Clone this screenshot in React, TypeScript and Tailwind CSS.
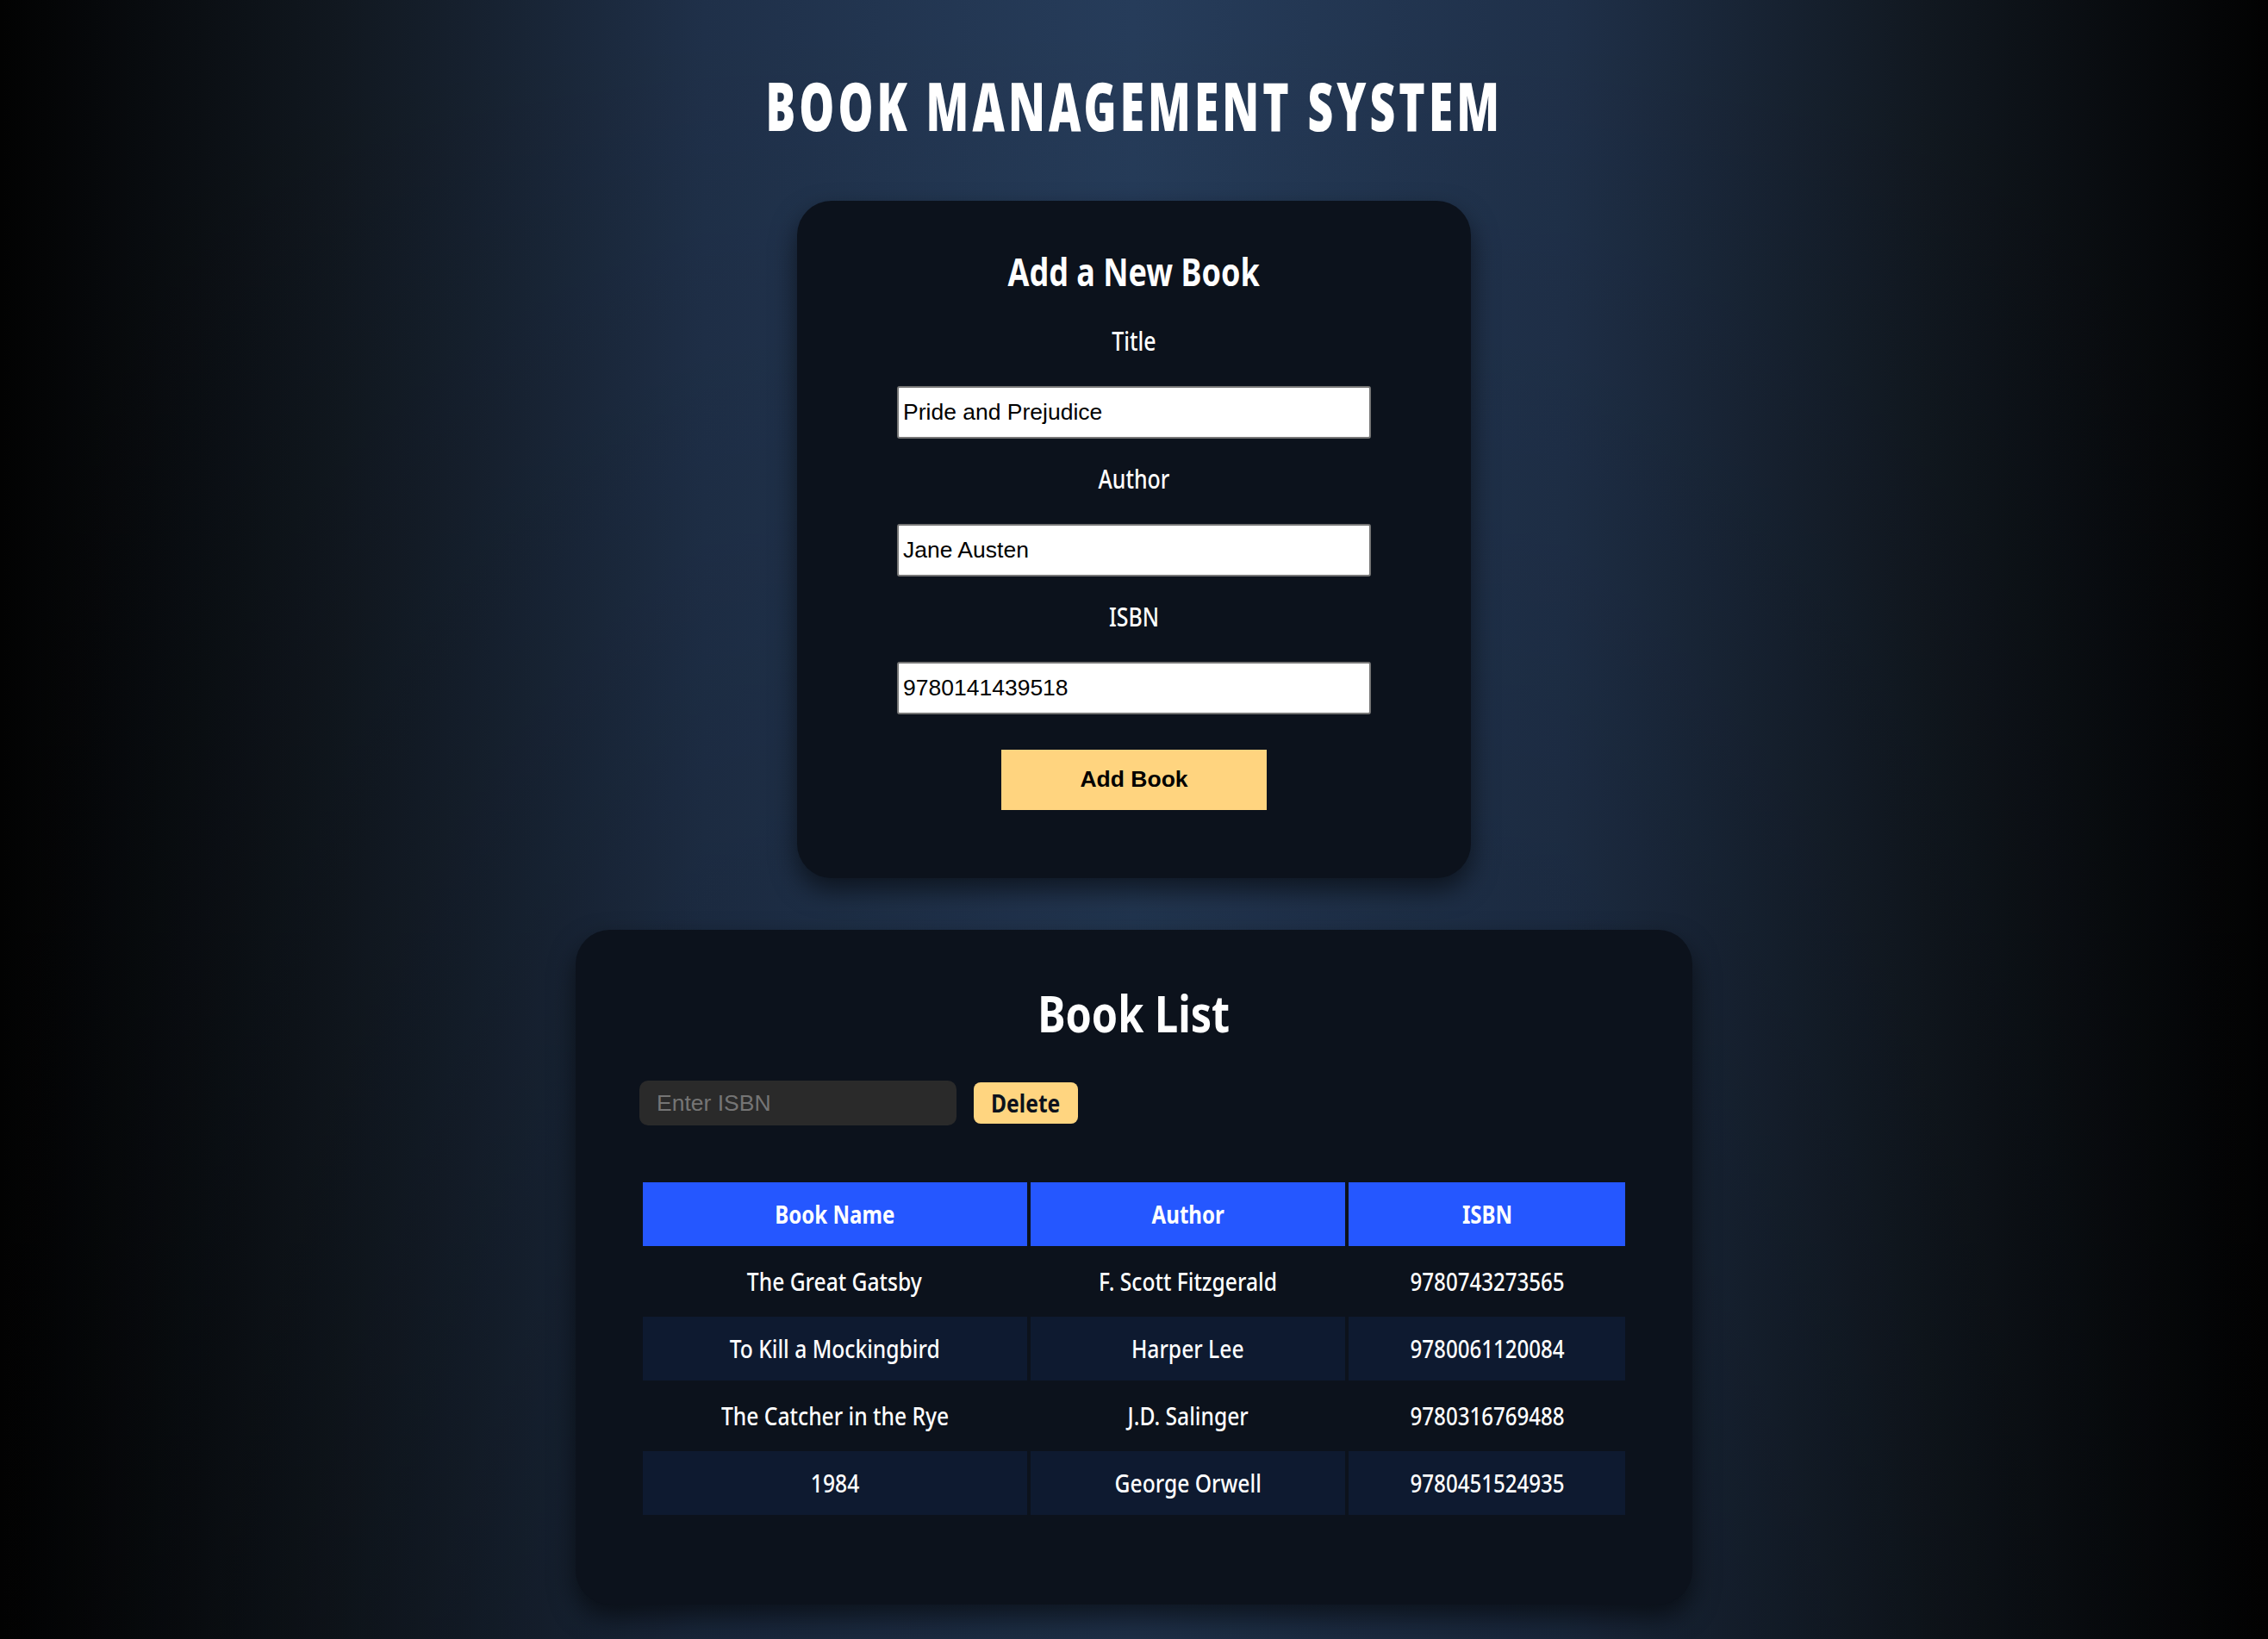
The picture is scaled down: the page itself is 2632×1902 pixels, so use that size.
import React from 'react';

const books = [
  { name: 'The Great Gatsby', author: 'F. Scott Fitzgerald', isbn: '9780743273565' },
  { name: 'To Kill a Mockingbird', author: 'Harper Lee', isbn: '9780061120084' },
  { name: 'The Catcher in the Rye', author: 'J.D. Salinger', isbn: '9780316769488' },
  { name: '1984', author: 'George Orwell', isbn: '9780451524935' },
];

// pas de police condensée installée : on resserre le texte à la main
function Narrow({ children, className = '' }: { children: React.ReactNode; className?: string }) {
  return <span className={`inline-block whitespace-nowrap ${className}`}>{children}</span>;
}

function Field({ label, value }: { label: string; value: string }) {
  return (
    <div className="flex flex-col items-center">
      <label className="text-[30px] leading-none font-medium text-white">
        <Narrow className="scale-x-[0.83]">{label}</Narrow>
      </label>
      <input
        readOnly
        value={value}
        className="mt-[37px] w-[550px] h-[61px] px-[5px] bg-white border-2 border-[#767676] rounded-[3px] text-black text-[26.5px] font-['Liberation_Sans',Arial,sans-serif] outline-none"
      />
    </div>
  );
}

export default function App() {
  return (
    <main className="min-h-screen w-full flex flex-col items-center pb-[40px] font-['Noto_Sans',sans-serif] text-white bg-[linear-gradient(to_bottom,rgba(0,0,0,0),rgba(0,0,0,0.22)),linear-gradient(to_right,#020202_0%,#111820_15%,#1f3049_31%,#263c5a_50%,#1f3049_69%,#111820_85%,#020202_100%)]">
      <h1 className="mt-[83px] text-[78px] leading-none font-black tracking-[0.08em] uppercase">
        <Narrow className="scale-x-[0.66]">Book Management System</Narrow>
      </h1>

      {/* formulaire d'ajout */}
      <section className="mt-[72px] w-[782px] rounded-[40px] bg-[#0c121c] pt-[59px] pb-[79px] flex flex-col items-center shadow-[0_14px_30px_rgba(0,0,0,0.55)]">
        <h2 className="text-[45px] leading-none font-bold">
          <Narrow className="scale-x-[0.8]">Add a New Book</Narrow>
        </h2>
        <div className="mt-[44px] flex flex-col gap-[32px]">
          <Field label="Title" value="Pride and Prejudice" />
          <Field label="Author" value="Jane Austen" />
          <Field label="ISBN" value="9780141439518" />
        </div>
        <button className="mt-[41px] w-[308px] h-[70px] bg-[#ffd47f] text-black font-bold text-[26.5px] font-['Liberation_Sans',Arial,sans-serif]">
          Add Book
        </button>
      </section>

      {/* liste */}
      <section className="mt-[60px] w-[1296px] rounded-[40px] bg-[#0c121c] pt-[66px] pb-[100px] px-[74px] shadow-[0_14px_30px_rgba(0,0,0,0.55)]">
        <h2 className="text-center text-[60px] leading-none font-bold">
          <Narrow className="scale-x-[0.81]">Book List</Narrow>
        </h2>
        <div className="mt-[49px] flex items-center gap-[20px]">
          <input
            placeholder="Enter ISBN"
            className="w-[368px] h-[52px] px-[20px] rounded-[10px] bg-[#2a2a2a] text-white placeholder:text-[#757575] text-[26.5px] font-['Liberation_Sans',Arial,sans-serif] outline-none"
          />
          <button className="w-[121px] h-[48px] rounded-[8px] bg-[#ffd580] text-[#0c121c] text-[29px] font-bold">
            <Narrow className="scale-x-[0.85]">Delete</Narrow>
          </button>
        </div>

        <table className="mt-[62px] border-separate border-spacing-[4px] text-[28px] font-medium">
          <thead>
            <tr>
              <th className="w-[446px] h-[74px] bg-[#2557ff] font-bold text-[29px]">
                <Narrow className="scale-x-[0.83]">Book Name</Narrow>
              </th>
              <th className="w-[366px] h-[74px] bg-[#2557ff] font-bold text-[29px]">
                <Narrow className="scale-x-[0.83]">Author</Narrow>
              </th>
              <th className="w-[321px] h-[74px] bg-[#2557ff] font-bold text-[29px]">
                <Narrow className="scale-x-[0.83]">ISBN</Narrow>
              </th>
            </tr>
          </thead>
          <tbody>
            {books.map((b, i) => {
              const bg = i % 2 === 1 ? 'bg-[#0e1a30]' : '';
              return (
                <tr key={b.isbn}>
                  <td className={`h-[74px] text-center ${bg}`}>
                    <Narrow className="scale-x-[0.88]">{b.name}</Narrow>
                  </td>
                  <td className={`h-[74px] text-center ${bg}`}>
                    <Narrow className="scale-x-[0.88]">{b.author}</Narrow>
                  </td>
                  <td className={`h-[74px] text-center ${bg}`}>
                    <Narrow className="scale-x-[0.86]">{b.isbn}</Narrow>
                  </td>
                </tr>
              );
            })}
          </tbody>
        </table>
      </section>
    </main>
  );
}
